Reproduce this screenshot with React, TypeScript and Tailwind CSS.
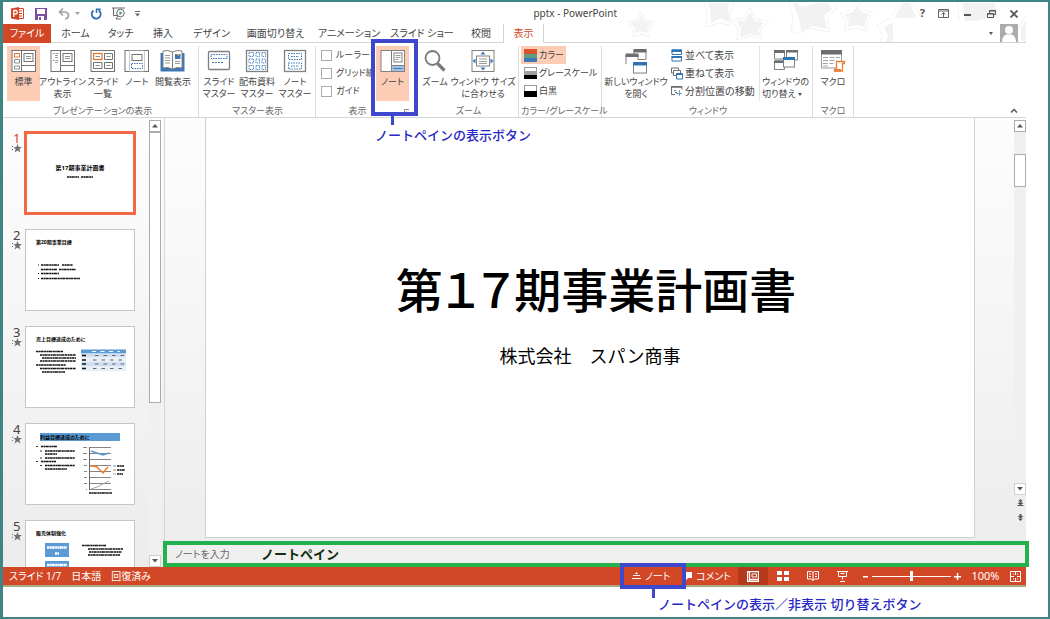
import { useState } from "react";
import type { ReactNode } from "react";

type IconProps = { className?: string };

function classNames(...classes: (string | false | undefined)[]) {
  return classes.filter(Boolean).join(" ");
}

/* ---------- icons ---------- */

const NormalViewIcon = () => (
  <svg width="26" height="24" viewBox="0 0 26 24" fill="none" stroke="#737373">
    <rect x="1" y="1.5" width="23.5" height="21" fill="#fff" />
    <path d="M10.5 1.5v21M10.5 16.5h14" />
    <rect x="3.5" y="4.5" width="5" height="3.5" stroke="#e8762c" />
    <path d="M3.5 10.5h5v3.5h-5zM3.5 17h5v3h-5z" strokeWidth=".8" />
    <rect x="13" y="4.5" width="9" height="8" />
    <path d="M15 7.5h5M15 9.5h5" strokeWidth=".8" />
  </svg>
);

const OutlineViewIcon = () => (
  <svg width="26" height="24" viewBox="0 0 26 24" fill="none" stroke="#737373">
    <rect x="1" y="1.5" width="23.5" height="21" fill="#fff" />
    <path d="M10.5 1.5v21M10.5 16.5h14" />
    <path d="M3 4.5h1.5M3 11.5h1.5" stroke="#e8762c" />
    <path d="M5.5 4.5h3M5 6.5h3M5 8.5h3M5.5 11.5h3M5 13.5h3" strokeWidth=".7" />
    <rect x="13" y="4.5" width="9" height="8" />
    <path d="M15 7.5h5M15 9.5h5" strokeWidth=".8" />
  </svg>
);

const SorterIcon = () => (
  <svg width="26" height="24" viewBox="0 0 26 24" fill="none" stroke="#737373">
    <rect x="1" y="1.5" width="23.5" height="21" fill="#fff" />
    <rect x="3.5" y="4.5" width="8.5" height="6" stroke="#e8762c" strokeWidth="1.3" />
    <path d="M14.5 4.5h8v6h-8zM3.5 13.5h8.500v6H3.5zM14.5 13.5h8v6h-8z" />
    <path d="M5.5 7.5h4.500M16.5 7.5h4M5.5 16.5h4.500M16.5 16.5h4" strokeWidth=".8" />
  </svg>
);

const NotesPageIcon = () => (
  <svg width="26" height="24" viewBox="0 0 26 24" fill="none" stroke="#737373">
    <rect x="1" y="1.5" width="23.5" height="21" fill="#fff" />
    <rect x="5.5" y="1.5" width="15" height="21" strokeWidth=".6" stroke="#aaa" />
    <rect x="8" y="5.5" width="10" height="6" />
    <rect x="7.5" y="14.5" width="11" height="5" stroke="#3a7abf" strokeDasharray="1.5 1" />
  </svg>
);

const ReadingViewIcon = () => (
  <svg width="26" height="24" viewBox="0 0 26 24" fill="none">
    <path d="M0.5 4h24v18.500h-24z" fill="#3e76b5" />
    <path d="M3 2q5-1.500 9.500 1v17q-4.500-2.500-9.500-1zM22 2q-5-1.500-9.500 1v17q4.500-2.500 9.500-1z" fill="#fff" stroke="#808080" />
    <path d="M5 6.500h5M5 9h5M5 11.500h5M5 14h5M15 12.500h5M15 14.500h5" stroke="#999" />
    <rect x="15" y="5" width="5.5" height="5" fill="#3e76b5" />
    <path d="M16 5h3v2z" fill="#f3b04b" />
  </svg>
);

const SlideMasterIcon = () => (
  <svg width="24" height="24" viewBox="0 0 24 24" fill="none" stroke="#808080">
    <rect x="1.5" y="2.5" width="21" height="18" rx="1" fill="#fff" strokeWidth="1.3" />
    <rect x="4" y="5.5" width="16" height="4" stroke="#3a7abf" strokeDasharray="1.5 1" />
    <path d="M5 13.5h11" stroke="#3a7abf" strokeDasharray="2 1" />
  </svg>
);

const HandoutMasterIcon = () => (
  <svg width="24" height="24" viewBox="0 0 24 24" fill="none" stroke="#808080">
    <rect x="1.5" y="1.5" width="21" height="21" fill="#fff" strokeWidth="1.3" />
    <path
      d="M4 3.5h4.500v4H4zM11 3.5h3.500v4H11zM17 3.5h3.500v4H17zM4 10h4.500v4H4zM11 10h3.500v4H11zM17 10h3.500v4H17zM4 16.5h4.500v4H4zM11 16.5h3.500v4H11zM17 16.5h3.500v4H17z"
      stroke="#3a7abf"
      strokeWidth=".9"
      strokeDasharray="1.4 .8"
    />
  </svg>
);

const NotesMasterIcon = () => (
  <svg width="24" height="24" viewBox="0 0 24 24" fill="none" stroke="#808080">
    <rect x="1.5" y="1.5" width="21" height="21" fill="#fff" strokeWidth="1.3" />
    <path d="M5.5 4.5h13v6h-13zM5.5 14h13v6h-13zM8 7.5h8M8 17h8" stroke="#3a7abf" strokeDasharray="1.5 1" />
  </svg>
);

const NotesPaneIcon = () => (
  <svg width="26" height="24" viewBox="0 0 26 24" fill="none" stroke="#808080">
    <rect x="1" y="1.5" width="23.5" height="21" fill="#fff" />
    <path d="M11.5 1.5v21" />
    <rect x="14" y="4" width="8" height="9" />
    <path d="M15.5 6.5h5M15.5 8.5h5M15.5 10.5h3" strokeWidth=".8" />
    <path d="M12 16h12v6H12z" fill="#a6c2e2" stroke="none" />
    <path d="M11.5 16.5h13" />
    <path d="M13.5 19.5h9" stroke="#3a7abf" />
  </svg>
);

const MagnifierIcon = () => (
  <svg width="24" height="24" viewBox="0 0 24 24" fill="none" stroke="#7a7a7a">
    <circle cx="9.5" cy="9" r="7" strokeWidth="1.8" fill="#fff" />
    <path d="M14.5 14.5l7 7" strokeWidth="3.2" />
  </svg>
);

const FitWindowIcon = () => (
  <svg width="24" height="24" viewBox="0 0 24 24" fill="none" stroke="#808080">
    <rect x="1" y="1.5" width="22" height="21" fill="#fff" />
    <rect x="5.5" y="7" width="13" height="10" />
    <path d="M8 10h8M8 12.5h8M8 14.5h8" strokeWidth=".8" />
    <path d="M9.5 5.5l2.500-3 2.500 3zM9.5 18.5l2.500 3 2.500-3zM4.500 9.500l-3 2.500 3 2.500zM19.500 9.500l3 2.500-3 2.500z" fill="#3a7abf" stroke="none" />
  </svg>
);

const NewWindowIcon = () => (
  <svg width="24" height="26" viewBox="0 0 24 26" fill="none" stroke="#808080">
    <path d="M10 1.5h12v9H10z" fill="#fff" />
    <path d="M9.5 0h13v3.500h-13z" fill="#6d6d6d" stroke="none" />
    <path d="M1.5 6h13v10h-13z" fill="#fff" stroke="none" />
    <path d="M2 15V6M14 6v5" />
    <path d="M1.5 4.500h13V8h-13z" fill="#6d6d6d" stroke="none" />
    <rect x="9.5" y="14" width="13" height="10" fill="#fff" />
    <path d="M9 13h14v3.500H9z" fill="#2e74b5" stroke="none" />
  </svg>
);

const SwitchWindowsIcon = () => (
  <svg width="26" height="24" viewBox="0 0 26 24" fill="none" stroke="#808080">
    <path d="M1.5 2h10v8h-10zM13.5 2h11v9h-11zM1.5 12h10v8.500h-10z" fill="#fff" />
    <path d="M1 1h11v3H1zM13 1h12v2.500H13zM1 11.500h10v2.500H1z" fill="#6d6d6d" stroke="none" />
    <rect x="10.5" y="8.5" width="11" height="9.5" fill="#fff" />
    <path d="M10 8h12v3H10z" fill="#2e74b5" stroke="none" />
  </svg>
);

const MacroIcon = () => (
  <svg width="26" height="24" viewBox="0 0 26 24" fill="none">
    <rect x="1.5" y="1.5" width="20" height="17.5" fill="#fff" stroke="#9a9a9a" />
    <path d="M1 1h21v4.500H1z" fill="#6d6d6d" />
    <path d="M3 8.500h5M9.500 8.500h5M16 8.500h4M3 11.500h5M9.500 11.500h5M3 14.500h5M9.500 14.500h4M3 17h5" stroke="#a5a5a5" />
    <path d="M16.5 12.5h8v2h-2v7.500h-8v-1.500h2z" fill="#fff" stroke="#ed7d31" strokeWidth="1.3" />
    <path d="M14 20h7v2.500h-7z" fill="#ed7d31" />
  </svg>
);

const ArrangeIcon = () => (
  <svg width="12" height="13" viewBox="0 0 12 13">
    <path d="M1 1h9.500v4.500H1zM1 7.500h9.500V12H1z" fill="#fff" stroke="#2e74b5" />
    <path d="M.5.5h10.500V3H.5zM.5 7h10.500v2H.5z" fill="#2e74b5" />
  </svg>
);

const CascadeIcon = () => (
  <svg width="12" height="13" viewBox="0 0 12 13" fill="#fff" stroke="#6d6d6d">
    <path d="M.5 1h7v5h-7z" />
    <path d="M2.5 3.5h7v5h-7z" />
    <path d="M5.5 6.5h6v5.500h-6z" stroke="#2e74b5" />
    <path d="M5.5 7.5h6" stroke="#2e74b5" />
  </svg>
);

const MoveSplitIcon = () => (
  <svg width="12" height="13" viewBox="0 0 12 13" fill="none" stroke="#6d6d6d">
    <path d="M4 9.5H.5v-8h10.500v3" />
    <path d="M.5 2h10.500" strokeWidth="1.5" />
    <path d="M3 5.5h2M4 7.500h2" />
    <path d="M8.500 5.500v6M5.500 8.500h6" stroke="#3a7abf" strokeDasharray="2 1" />
  </svg>
);

const ColorSwatch = ({ kind }: { kind: "color" | "gray" | "bw" }) => (
  <svg width="13" height="13" viewBox="0 0 13 13" shapeRendering="crispEdges">
    {kind === "color" && (
      <>
        <path d="M0 0h13v5H0z" fill="#d9532c" />
        <path d="M0 5h13v4H0z" fill="#5a9e84" />
        <path d="M0 9h13v4H0z" fill="#3f78b8" />
      </>
    )}
    {kind === "gray" && (
      <>
        <path d="M.5.5h12v11H.5z" fill="#fff" stroke="#999" />
        <path d="M0 4h13v4H0z" fill="#a0a0a0" />
        <path d="M0 8h13v4H0z" fill="#000" />
      </>
    )}
    {kind === "bw" && (
      <>
        <path d="M.5.5h12v11H.5z" fill="#fff" stroke="#999" />
        <path d="M0 6h13v6H0z" fill="#000" />
      </>
    )}
  </svg>
);

const Star = ({ className }: IconProps) => (
  <svg className={className} width="10" height="9" viewBox="0 0 10 9" fill="#707070">
    <path d="M5.5 0l1.200 3H10L7.400 5l1 3.500-2.900-2-2.900 2 1-3.500L1.500 3h2.800zM0 2h1v1H0zM0 5h1v1H0z" />
  </svg>
);

const Arrow = ({ up }: { up?: boolean }) => (
  <svg width="6" height="4" viewBox="0 0 6 4" fill="#555">
    <path d={up ? "M3 0l3 3.500H0z" : "M3 3.500L6 0H0z"} />
  </svg>
);

/* faint star pattern behind the window buttons */
const StarPattern = () => (
  <svg className="absolute top-0 right-0" width="400" height="39" viewBox="626 3 400 39" fill="#f2f2f2" stroke="#f2f2f2" strokeLinejoin="round">
    <g strokeWidth="2">
      <path d="M641 17l3 5 6 1-4 4 1 5-6-2-5 2 0-5-4-4 6-1z" />
      <path d="M709 0h20l-2 9 2 12-9-4-8 5-1-11z" />
      <path d="M750 14l4 8 8 1-5 6 2 6-9-2-9 3 1-8-4-6 8-1z" />
      <path d="M793 1l8 7 14-3 9-5 7 9-8 6 3 13-14-3-10 6-2-12z" />
      <path d="M857 7l4 6 7 2-4 5v6l-7-2-8 2 1-7-4-4 7-2z" />
      <path d="M904 2h4l7 15h-19z" />
      <path d="M892 24l-7 4 4 7-3 9h10V24z" />
      <path d="M963 0h30l3 16-30 6z" />
      <path d="M1022 28l6-10v25l-6-4z" />
    </g>
    <g fill="none" strokeWidth="1">
      <path d="M641 12l5 8 9 2-6 7 1 8-9-3-8 3 0-8-6-7 9-2zM704 1l3 13-1 13 13-4 11 2 0-12 4-10M750 8l6 11 13 2-9 9 3 9-13-3-13 4 1-11-6-9 12-2zM788 0l3 10 2 8-2 13 7 3 11-6 20 4-1-16 9-8-6-8M857 1l6 9 10 3-6 8v10l-10-3-13 3 2-11-6-7 10-3zM892 16l10-16M911 0l10 17M890 18l-13 7 6 10-4 9M957 1l3 24M1018 29l8-14" />
    </g>
    <path d="M893 21h97v21h-97z" fill="#fff" stroke="none" />
  </svg>
);

/* ---------- title bar ---------- */

const TitleBar = () => (
  <div className="relative flex h-[21px] items-center">
    <StarPattern />
    <div className="relative flex flex-1 items-center pl-2">
      <svg width="13" height="13" viewBox="0 0 13 13">
        <path d="M7 1.500h5.500v10H7" fill="#fff" stroke="#d24726" />
        <path d="M8 4h3M8 6.500h3M8 9h3" stroke="#d24726" />
        <path d="M0 1.500L8 0v13L0 11.500z" fill="#d24726" />
        <path d="M2.800 10V3.500h1.700a1.700 1.700 0 010 3.600H2.800" fill="none" stroke="#fff" strokeWidth="1.3" />
      </svg>
      <button type="button" aria-label="上書き保存" className="ml-[11px]">
        <svg width="12" height="12" viewBox="0 0 12 12">
          <path d="M0 0h12v12H0z" fill="#7d4fa3" />
          <path d="M2 1h8v5H2zM3 8h6v4H3z" fill="#fff" />
          <path d="M4 9h2v3H4z" fill="#7d4fa3" />
        </svg>
      </button>
      <button type="button" aria-label="元に戻す" className="ml-[11px] flex items-center gap-[5px]">
        <svg width="12" height="12" viewBox="0 0 12 12" fill="none" stroke="#a3a3a3" strokeWidth="1.7">
          <path d="M5 .5L1.500 4 5 7.500M1.500 4H7q3.500.5 3.500 3.500T7 11" />
        </svg>
        <svg width="5" height="3" viewBox="0 0 5 3" fill="#a3a3a3">
          <path d="M0 0h5L2.500 3z" />
        </svg>
      </button>
      <button type="button" aria-label="繰り返し" className="ml-[10px]">
        <svg width="12" height="12" viewBox="0 0 12 12" fill="none" stroke="#2e6db4" strokeWidth="1.8">
          <path d="M3.500 2.500A4.500 4.500 0 108.500 2.200" />
          <path d="M6.500 5V1.200h4.200" strokeWidth="1.5" />
        </svg>
      </button>
      <button type="button" aria-label="最初から開始" className="ml-[10px]">
        <svg width="14" height="13" viewBox="0 0 14 13" fill="none" stroke="#666">
          <path d="M0 1h13M1.500 1v7.500h4M4 12l2-3M4 12h5" />
          <circle cx="8.500" cy="6" r="3.8" fill="#fff" />
          <path d="M7.500 4l3 2-3 2z" fill="#3f9a6b" stroke="none" />
        </svg>
      </button>
      <button type="button" aria-label="クイック アクセスのカスタマイズ" className="ml-[9px]">
        <svg width="5" height="6" viewBox="0 0 5 6" fill="#666">
          <path d="M0 0h5v1H0zM0 2.500h5L2.500 5.500z" />
        </svg>
      </button>
    </div>
    <h1 className="relative text-[10px] text-[#444]">pptx - PowerPoint</h1>
    <div className="relative flex w-[409px] items-center justify-end gap-[13px] pr-2 text-[#555]">
      <button type="button" className="text-[11px] font-bold">?</button>
      <button type="button" aria-label="リボンの表示オプション">
        <svg width="11" height="9" viewBox="0 0 11 9" fill="none" stroke="#666">
          <path d="M.5.5h10v8H.5zM.5 2h10M5.500 8V4M3.500 5.500l2-2 2 2" />
        </svg>
      </button>
      <button type="button" aria-label="最小化" className="ml-[2px]">
        <svg width="8" height="8" viewBox="0 0 8 8" fill="#555"><path d="M0 4h7v2H0z" /></svg>
      </button>
      <button type="button" aria-label="元のサイズに戻す" className="ml-[2px]">
        <svg width="9" height="8" viewBox="0 0 9 8" fill="none" stroke="#555">
          <path d="M2.500 3V.5h6v4H7M2.500 1h6M.5 3.500h6v4h-6zM.5 4h6" />
        </svg>
      </button>
      <button type="button" aria-label="閉じる" className="ml-px">
        <svg width="8" height="8" viewBox="0 0 8 8" stroke="#555" strokeWidth="1.8"><path d="M.5.5l7 7M7.500.5l-7 7" /></svg>
      </button>
    </div>
  </div>
);

const tabs = [
  { name: "ホーム", width: "w-[49px]" },
  { name: "タッチ", width: "w-[41px]" },
  { name: "挿入", width: "w-[44px]" },
  { name: "デザイン", width: "w-[53px]" },
  { name: "画面切り替え", width: "w-[75px]" },
  { name: "アニメーション", width: "w-[72px]" },
  { name: "スライド ショー", width: "w-[74px]" },
  { name: "校閲", width: "w-[44px]" },
];

const TabRow = () => (
  <nav className="relative flex h-[19px] text-[10px] text-[#444]">
    <button type="button" className="w-12 bg-[#d24726] text-white">ファイル</button>
    {tabs.map((tab) => (
      <button key={tab.name} type="button" className={classNames(tab.width, "border-b border-[#d5d5d5] whitespace-nowrap")}>
        {tab.name}
      </button>
    ))}
    <button type="button" className="w-[41px] border-x border-[#d5d5d5] bg-white text-[#d24726]">表示</button>
    <div className="flex flex-1 items-end justify-end gap-[7px] border-b border-[#d5d5d5] pr-2">
      <span className="pb-[7px]">
        <svg width="4" height="3" viewBox="0 0 4 3" fill="#555"><path d="M0 0h4L2 3z" /></svg>
      </span>
      <svg width="18" height="18" viewBox="0 0 18 18">
        <path d="M0 0h18v18H0z" fill="#ababab" />
        <circle cx="9" cy="6" r="4" fill="#fff" />
        <path d="M2 18q0-6 4.500-7.500h5Q16 12 16 18z" fill="#fff" />
      </svg>
    </div>
  </nav>
);

/* ---------- ribbon ---------- */

type RibbonButtonProps = {
  icon: ReactNode;
  lines: ReactNode[];
  width: string;
  active?: boolean;
};

const RibbonButton = ({ icon, lines, width, active }: RibbonButtonProps) => (
  <button
    type="button"
    className={classNames(
      "flex h-[55px] shrink-0 flex-col items-center gap-[3px] pt-[3px] leading-3 whitespace-nowrap",
      width,
      active && "bg-[#fcccb5]"
    )}
  >
    <span className="flex h-6">{icon}</span>
    <span>
      {lines.map((line, i) => (
        <span key={i} className="block">{line}</span>
      ))}
    </span>
  </button>
);

type GroupProps = { label: string; width: string; children: ReactNode; noLine?: boolean };

const Group = ({ label, width, children, noLine }: GroupProps) => (
  <section className={classNames("flex h-[71px] flex-col justify-between", width, !noLine && "border-r border-[#dcdcdc]")}>
    <div className="flex">{children}</div>
    <h2 className="text-center text-[9px] leading-3 whitespace-nowrap text-[#666]">{label}</h2>
  </section>
);

type CalloutProps = { text: string; frame: string; stem: string; textPos: string };

/* blue frame round a control, with a stem and a caption under it */
const Callout = ({ text, frame, stem, textPos }: CalloutProps) => (
  <div className={classNames("pointer-events-none absolute z-10 border-4 border-[#3f48cc]", frame)}>
    <span className={classNames("absolute top-full h-[13px] w-[3px] bg-[#3f48cc]", stem)} />
    <p
      className={classNames(
        "absolute top-full text-[13px] leading-5 font-medium whitespace-nowrap text-[#2727c4] [font-feature-settings:normal]",
        textPos
      )}
    >
      {text}
    </p>
  </div>
);

const Ribbon = () => {
  const [shown, setShown] = useState({ ルーラー: false, グリッド線: false, ガイド: false });

  return (
    <div className="flex h-[75px] border-b border-[#d5d5d5] pt-[3px] text-[9px] text-[#444]">
      <Group label="プレゼンテーションの表示" width="w-[196px] pl-1">
        <RibbonButton active width="w-[33px]" icon={<NormalViewIcon />} lines={["標準"]} />
        <RibbonButton width="w-[45px]" icon={<OutlineViewIcon />} lines={["アウトライン", "表示"]} />
        <RibbonButton width="w-9" icon={<SorterIcon />} lines={["スライド", "一覧"]} />
        <RibbonButton width="w-8" icon={<NotesPageIcon />} lines={["ノート"]} />
        <RibbonButton width="w-10" icon={<ReadingViewIcon />} lines={["閲覧表示"]} />
      </Group>
      <Group label="マスター表示" width="w-[117px] pl-px">
        <RibbonButton width="w-[38px]" icon={<SlideMasterIcon />} lines={["スライド", "マスター"]} />
        <RibbonButton width="w-[38px]" icon={<HandoutMasterIcon />} lines={["配布資料", "マスター"]} />
        <RibbonButton width="w-[38px]" icon={<NotesMasterIcon />} lines={["ノート", "マスター"]} />
      </Group>
      <div className="relative w-[99px]">
        <Group label="表示" width="w-[83px]" noLine>
          <div className="w-[60px] shrink-0 pl-[5px]">
            {Object.entries(shown).map(([name, checked]) => (
              <label key={name} className="flex h-[18px] items-center gap-1 whitespace-nowrap">
                <input
                  type="checkbox"
                  checked={checked}
                  onChange={() => setShown({ ...shown, [name]: !checked })}
                  className="size-[11px] appearance-none border border-[#ababab] bg-white checked:bg-[#fcccb5]"
                />
                {name}
              </label>
            ))}
          </div>
          <RibbonButton active width="w-[33px]" icon={<NotesPaneIcon />} lines={["ノート"]} />
        </Group>
        <button type="button" aria-label="グリッドの設定" className="absolute right-[5px] bottom-[2px]">
          <svg width="6" height="6" viewBox="0 0 6 6" fill="none" stroke="#888"><path d="M.5 5V.5H5M2.500 2.500l3 3M5.500 3v2.500H3" /></svg>
        </button>
        <Callout
          text="ノートペインの表示ボタン"
          frame="top-[-7px] right-[-3px] h-[77px] w-[47px]"
          stem="left-4"
          textPos="left-0 pt-[13px]"
        />
      </div>
      <Group label="ズーム" width="w-[104px] pl-1">
        <RibbonButton width="w-8" icon={<MagnifierIcon />} lines={["ズーム"]} />
        <RibbonButton width="w-16" icon={<FitWindowIcon />} lines={["ウィンドウ サイズ", "に合わせる"]} />
      </Group>
      <Group label="カラー/グレースケール" width="w-[83px] pl-[2px]">
        <div>
          <button type="button" className="flex h-[18px] w-[45px] items-center gap-[2px] bg-[#fcccb5] pl-[3px] whitespace-nowrap">
            <ColorSwatch kind="color" />
            カラー
          </button>
          <button type="button" className="flex h-[18px] items-center gap-[2px] pl-[3px] whitespace-nowrap">
            <ColorSwatch kind="gray" />
            グレースケール
          </button>
          <button type="button" className="flex h-[18px] items-center gap-[2px] pl-[3px] whitespace-nowrap">
            <ColorSwatch kind="bw" />
            白黒
          </button>
        </div>
      </Group>
      <Group label="ウィンドウ" width="w-[211px] pl-[2px]">
        <RibbonButton width="w-16" icon={<NewWindowIcon />} lines={["新しいウィンドウ", "を開く"]} />
        <div className="w-[92px] shrink-0 border-r border-[#e4e4e4] pl-[3px] text-[10px]">
          <button type="button" className="flex h-[18px] items-center gap-[2px] whitespace-nowrap"><ArrangeIcon />並べて表示</button>
          <button type="button" className="flex h-[18px] items-center gap-[2px] whitespace-nowrap"><CascadeIcon />重ねて表示</button>
          <button type="button" className="flex h-[18px] items-center gap-[2px] whitespace-nowrap"><MoveSplitIcon />分割位置の移動</button>
        </div>
        <RibbonButton
          width="w-[51px]"
          icon={<SwitchWindowsIcon />}
          lines={[
            "ウィンドウの",
            <span className="flex items-center gap-[2px]">
              切り替え
              <svg width="4" height="3" viewBox="0 0 4 3" fill="#555"><path d="M0 0h4L2 3z" /></svg>
            </span>,
          ]}
        />
      </Group>
      <Group label="マクロ" width="w-[41px]">
        <RibbonButton width="w-10" icon={<MacroIcon />} lines={["マクロ"]} />
      </Group>
      <div className="flex flex-1 items-end justify-end pr-2 pb-1">
        <button type="button" aria-label="リボンを折りたたむ">
          <svg width="8" height="5" viewBox="0 0 8 5" fill="none" stroke="#555" strokeWidth="1.5"><path d="M1 4.500l3-3 3 3" /></svg>
        </button>
      </div>
    </div>
  );
};

/* ---------- slide thumbnails ---------- */

const body = { stroke: "#111", strokeWidth: 1.6, strokeDasharray: "2.4 .4 1.6 .3 3 .5", fill: "none" };

const slides = [
  {
    no: 1,
    content: (
      <div className="flex h-full flex-col items-center justify-center pb-1">
        <p className="text-[6px] leading-2 font-bold [font-feature-settings:normal]">第17期事業計画書</p>
        <svg width="26" height="7" viewBox="0 0 26 7"><path d="M0 5h12M14 5h12" {...body} /></svg>
      </div>
    ),
  },
  {
    no: 2,
    content: (
      <>
        <p className="px-[10px] pt-2 text-[5px] leading-2 font-bold">第20期事業目標</p>
        <svg width="108" height="64" viewBox="0 16 108 64">
          <path d="M15 35h18M36 35h11M15 39.500h16M33 39.500h17M15 43.500h18M15 48.500h39" {...body} />
          <path d="M12 35h1M12 43.500h1M12 48.500h1" stroke="#111" />
        </svg>
      </>
    ),
  },
  {
    no: 3,
    content: (
      <>
        <p className="px-[10px] pt-2 text-[5px] leading-2 font-bold">売上目標達成のために</p>
        <svg width="108" height="64" viewBox="0 16 108 64">
          <path d="M10 24.500h27M14 28h36M16 31h34M14 34h36M10 38h30M14 41.500h36M16 45h23" {...body} />
          <path d="M55 22.500h45v4H55z" fill="#5b9bd5" />
          <path d="M55 26.500h45v4H55zM55 35h45v4.500H55z" fill="#d0deef" />
          <path d="M55 30.500h45v4.500H55zM55 39.500h45v4.500H55z" fill="#e9eff7" />
          <path d="M56 28.500h4M56 33h4M56 37h4M56 41.500h4" stroke="#111" strokeWidth="1.6" />
          <path d="M66 24.500h28" stroke="#fff" strokeDasharray="4 4.500" />
          <path d="M69 28.500h29M67 33h31M69 37h29M67 41.500h31" stroke="#667" strokeDasharray="3.5 5" />
        </svg>
      </>
    ),
  },
  {
    no: 4,
    content: (
      <>
        <p className="mt-[9px] mr-[14px] ml-[14px] bg-[#5b9bd5] text-[5px] leading-2 font-bold">利益目標達成のために</p>
        <svg width="108" height="63" viewBox="0 17 108 63">
          <path d="M15 22.500h16M19 27h30M19 30h12M19 34h30M15 37.500h15M19 41.500h30M19 45h22" {...body} />
          <path d="M10 22.500h2M10 37.500h2M14 27h2M14 34h2M14 41.500h2" stroke="#333" />
          <path d="M63 23.500h22M63 29.500h22M63 35.500h22M63 41.500h22M63 47.500h22M63 53.500h22M63 59.500h22M63 65.500h22" stroke="#777" strokeWidth=".9" />
          <path d="M63.500 23v42.500" stroke="#666" />
          <path d="M57 23.500h4M57 29.500h4M57 35.500h4M58 41.500h3M58 47.500h3M58 53.500h3M58 59.500h3M60 65.500h1" stroke="#888" />
          <path d="M65 27l6 2 6 2 6-2" fill="none" stroke="#5b9bd5" strokeWidth="1.5" />
          <path d="M64 42h3l4 1 6 6 5-6" fill="none" stroke="#ed7d31" strokeWidth="1.5" />
          <path d="M65 65l6-2 6-3 6-3" fill="none" stroke="#a5a5a5" />
          <path d="M63 69h23M91 42h7M91 46h8M91 50h6" {...body} />
          <path d="M87 42h3" stroke="#5b9bd5" />
          <path d="M87 46h3" stroke="#ed7d31" />
          <path d="M87 50h3" stroke="#a5a5a5" />
        </svg>
      </>
    ),
  },
  {
    no: 5,
    content: (
      <>
        <p className="px-[10px] pt-2 text-[5px] leading-2 font-bold">販売体制強化</p>
        <svg width="108" height="64" viewBox="0 16 108 64">
          <path d="M19 22h24v14H19zM19 40h24v14H19z" fill="#5b9bd5" />
          <path d="M21 26.500h20M29 32.500h4M21 44h20" {...body} stroke="#fff" strokeWidth={2.5} />
          <path d="M56 24.500h24M62 28h35M63 31h33M62 34h32" {...body} />
        </svg>
      </>
    ),
  },
];

const Scrollbar = ({ thumb }: { thumb: string }) => (
  <div className="flex w-3 flex-1 flex-col bg-[#f0f0f0]">
    <button type="button" aria-label="上へスクロール" className="flex h-3 items-center justify-center border border-[#ababab] bg-white"><Arrow up /></button>
    <div className="flex-1">
      <div className={classNames("border border-[#ababab] bg-white", thumb)} />
    </div>
    <button type="button" aria-label="下へスクロール" className="flex h-3 items-center justify-center border border-[#cfcfcf] bg-white"><Arrow /></button>
  </div>
);

const Thumbnails = () => {
  const [current, setCurrent] = useState(1);

  return (
    <aside className="flex w-[162px] border-r border-[#d5d5d5]">
      <ol className="flex-1 overflow-hidden pt-[14px]">
        {slides.map((slide) => (
          <li key={slide.no} className="flex h-[97px] pl-[9px]">
            <div className={classNames("w-3 text-[13px] leading-3", slide.no === current ? "text-[#d24726]" : "text-[#444]")}>
              <span className="pl-px">{slide.no}</span>
              <Star />
            </div>
            <button
              type="button"
              aria-label={`スライド ${slide.no}`}
              onClick={() => setCurrent(slide.no)}
              className={classNames(
                "ml-px h-[82px] w-[110px] overflow-hidden bg-white text-left text-black",
                slide.no === current ? "border-2 border-[#f26843] outline outline-[#f26843]" : "border border-[#c6c6c6]"
              )}
            >
              {slide.content}
            </button>
          </li>
        ))}
      </ol>
      <div className="flex pt-[2px] pr-[3px]">
        <div className="flex flex-col">
          <Scrollbar thumb="h-[271px]" />
        </div>
      </div>
    </aside>
  );
};

/* ---------- editor ---------- */

const Editor = () => (
  <main className="flex min-w-0 flex-1 flex-col">
    <div className="flex min-h-0 flex-1">
      <div className="flex-1 pr-[39px] pb-[3px] pl-10">
        <article className="flex h-full flex-col items-center border-x border-b border-[#d0d0d0] bg-white pt-[140px] text-black">
          <h2 className="pl-3 text-[47px] leading-[64px] font-medium whitespace-nowrap [font-feature-settings:'palt']">第１７期事業計画書</h2>
          <p className="pt-5 text-[18px] leading-7 whitespace-nowrap [font-feature-settings:normal]">株式会社　スパン商事</p>
        </article>
      </div>
      <div className="flex flex-col items-center pt-[2px]">
        <Scrollbar thumb="mt-[22px] h-[33px]" />
        <div className="flex flex-col items-center gap-2 py-1 pb-5">
          <button type="button" aria-label="前のスライド">
            <svg width="7" height="7" viewBox="0 0 7 7" fill="#555"><path d="M3.500 0L6 2.500H1zM3.500 2.500L6.500 5h-2v1h2v1h-6V6h2V5h-2z" /></svg>
          </button>
          <button type="button" aria-label="次のスライド">
            <svg width="7" height="7" viewBox="0 0 7 7" fill="#555"><path d="M3.500 7L6 4.500H1zM3.500 4.500L6.500 2h-2V0h-2v2h-2z" /></svg>
          </button>
        </div>
      </div>
    </div>
    <div className="z-10 -mr-[3px] -ml-[2px] flex h-[26px] items-center border-4 border-[#22b14c] bg-[#efefef] pl-2">
      <input
        aria-label="ノートペイン"
        placeholder="ノートを入力"
        className="w-[86px] bg-transparent text-[10px] text-[#444] outline-none placeholder:text-[#666]"
      />
      <strong className="text-[13px] leading-4 font-bold whitespace-nowrap text-[#0e2e10] [font-feature-settings:normal]">ノートペイン</strong>
    </div>
  </main>
);

/* ---------- status bar ---------- */

const StatusBar = () => {
  const [zoom, setZoom] = useState(50);

  return (
    <footer className="flex h-5 items-center border-b-2 border-[#a9a983] bg-[#d24726] text-[10px] text-white">
      <div className="flex flex-1 gap-[10px] pl-[6px]">
        <span>スライド 1/7</span>
        <span>日本語</span>
        <span>回復済み</span>
      </div>
      <div className="relative flex h-full w-[57px] items-center">
        <button type="button" className="flex items-center gap-1 pl-[5px]">
          <svg width="9" height="8" viewBox="0 0 9 8" fill="#fff"><path d="M4.500 0L6 2H3zM1 3h7v1H1zM0 6h9v1H0z" /></svg>
          ノート
        </button>
        <Callout
          text="ノートペインの表示／非表示 切り替えボタン"
          frame="right-[-2px] left-[-7px] inset-y-[-4px]"
          stem="left-7"
          textPos="left-[34px] pt-[9px]"
        />
      </div>
      <button type="button" className="flex w-[54px] items-center gap-1 whitespace-nowrap">
        <svg className="shrink-0" width="8" height="9" viewBox="0 0 8 9" fill="#fff"><path d="M0 0h8v6H4L1.500 9V6H0z" /></svg>
        コメント
      </button>
      <button type="button" aria-label="標準" className="flex h-full w-[30px] items-center justify-center bg-[#b5391b]">
        <svg width="12" height="11" viewBox="0 0 12 11" fill="none" stroke="#fff">
          <path d="M.5.5h11v10H.5zM2.500 .5v10M3 8.500h8" strokeWidth="1.3" />
          <path d="M5 3h4.500v3H5z" />
        </svg>
      </button>
      <button type="button" aria-label="スライド一覧" className="flex w-[30px] justify-center">
        <svg width="12" height="10" viewBox="0 0 12 10" fill="#fff"><path d="M0 0h5v4H0zM7 0h5v4H7zM0 6h5v4H0zM7 6h5v4H7z" /></svg>
      </button>
      <button type="button" aria-label="閲覧表示" className="flex w-[30px] justify-center">
        <svg width="12" height="10" viewBox="0 0 12 10" fill="none" stroke="#fff"><path d="M.5.5h4L6 1.500 7.500.5h4v7.500h-4L6 9.500 4.500 8h-4zM6 1.500v8M2 3h2M2 5.500h2M8 3h2M8 5.500h2" /></svg>
      </button>
      <button type="button" aria-label="スライド ショー" className="flex w-[30px] justify-center">
        <svg width="12" height="11" viewBox="0 0 12 11" fill="none" stroke="#fff"><path d="M0 .5h11M1.500.5v5h8v-5M5.500 5.500v3M3 10.500h5M3.500 2.500h4" /></svg>
      </button>
      <button type="button" aria-label="縮小" className="ml-[5px]" onClick={() => setZoom(zoom - 10)}>
        <svg width="6" height="7" viewBox="0 0 6 7" fill="#fff"><path d="M0 3h5v1.500H0z" /></svg>
      </button>
      <input
        type="range"
        aria-label="ズーム"
        value={zoom}
        onChange={(e) => setZoom(Number(e.target.value))}
        className="mx-[3px] h-[10px] w-[79px] appearance-none bg-transparent bg-[linear-gradient(#fff,#fff)] bg-[length:100%_1px] bg-center bg-no-repeat [&::-webkit-slider-thumb]:h-[10px] [&::-webkit-slider-thumb]:w-[3px] [&::-webkit-slider-thumb]:appearance-none [&::-webkit-slider-thumb]:bg-white"
      />
      <button type="button" aria-label="拡大" onClick={() => setZoom(zoom + 10)}>
        <svg width="7" height="7" viewBox="0 0 7 7" fill="#fff"><path d="M0 3h7v1.500H0zM2.750 0h1.500v7h-1.500z" /></svg>
      </button>
      <span className="w-[49px] text-center text-[11px]">100%</span>
      <button type="button" aria-label="ウィンドウに合わせる" className="mr-[5px]">
        <svg width="11" height="11" viewBox="0 0 11 11" fill="none" stroke="#fff"><path d="M.5.5h10v10H.5zM5.500 1v3M5.500 7v3M1 5.500h3M7 5.500h3" /><path d="M3 3h1M7 3h1M3 8h1M7 8h1" /></svg>
      </button>
    </footer>
  );
};

export default function App() {
  return (
    <div
      lang="ja"
      className="flex h-screen flex-col overflow-hidden border-2 border-l-[3px] border-[#3f8585] bg-white pb-[30px] font-['Noto_Sans','Noto_Sans_CJK_JP',sans-serif] [font-feature-settings:'palt']"
    >
      <div className="mr-[22px] flex min-h-0 flex-1 flex-col pt-px">
        <header>
          <TitleBar />
          <TabRow />
          <Ribbon />
        </header>
        <div className="flex min-h-0 flex-1 bg-linear-to-b from-[#fdfdfd] to-[#ececec]">
          <Thumbnails />
          <Editor />
        </div>
        <StatusBar />
      </div>
    </div>
  );
}
